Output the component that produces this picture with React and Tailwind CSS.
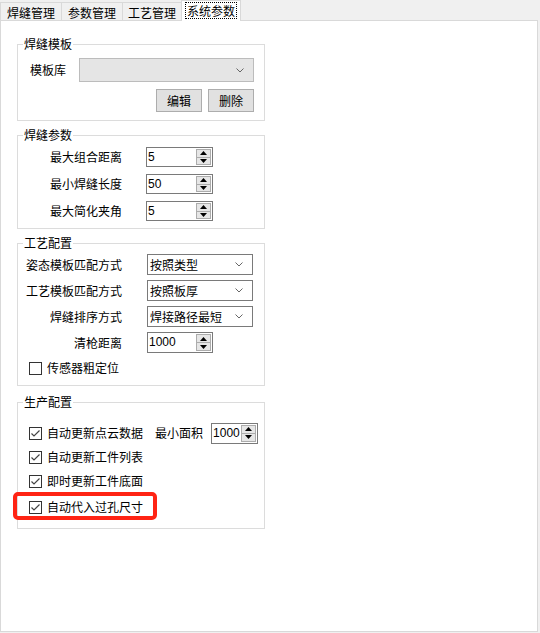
import React from 'react';

const ui = "font-['Noto_Sans_CJK_SC','Liberation_Sans',sans-serif] text-[12px] leading-[14px] text-black";

function Tab({ label, w, active }) {
  if (active) {
    return (
      <div className={`relative z-10 -mb-px flex h-[21px] items-start justify-center border border-b-0 border-[#d9d9d9] bg-white pt-[2px] ${w}`}>
        <span className="px-[1px] leading-[15px] outline-1 outline-dotted outline-[#000]">{label}</span>
      </div>
    );
  }
  return (
    <div className={`flex h-[18px] items-center justify-center border border-b-0 border-r-0 border-[#d9d9d9] bg-[#f0f0f0] pt-[2px] ${w}`}>
      {label}
    </div>
  );
}

function Group({ title, h, mt, children }) {
  return (
    <div className={`relative ml-[16px] w-[248px] border border-[#dcdcdc] ${h} ${mt}`}>
      <span className="absolute -top-[8px] left-[5px] bg-white px-[1px]">{title}</span>
      {children}
    </div>
  );
}

function Arrow({ up }) {
  return (
    <svg width="7" height="4" viewBox="0 0 7 4">
      <path d={up ? 'M0 4 L3.5 0 L7 4 Z' : 'M0 0 L3.5 4 L7 0 Z'} fill="#000" />
    </svg>
  );
}

function Spin({ value, w, h = 'h-[21px]' }) {
  return (
    <div className={`flex border border-[#7a7a7a] bg-white ${w} ${h}`}>
      <span className="flex-1 pl-[1px] pt-[2px] font-['Liberation_Sans',sans-serif] text-[12px] leading-[14px]">{value}</span>
      <div className="flex w-[16px] flex-col py-[1px] pr-[1px]">
        <div className="flex flex-1 items-center justify-center border border-[#acacac] bg-[#e6e6e6]">
          <Arrow up />
        </div>
        <div className="flex flex-1 items-center justify-center border border-t-0 border-[#acacac] bg-[#e6e6e6]">
          <Arrow />
        </div>
      </div>
    </div>
  );
}

function Chevron() {
  return (
    <svg width="8" height="5" viewBox="0 0 8 5" className="ml-auto mr-[9px]">
      <path d="M0.5 0.5 L4 4 L7.5 0.5" fill="none" stroke="#666" strokeWidth="1" />
    </svg>
  );
}

function Combo({ value }) {
  return (
    <div className="flex h-[21px] w-[106px] items-center border border-[#7a7a7a] bg-white pl-[2px]">
      <span>{value}</span>
      <Chevron />
    </div>
  );
}

function Check({ checked }) {
  return (
    <div className="flex h-[13px] w-[13px] items-center justify-center border border-[#333] bg-white">
      {checked && (
        <svg width="11" height="11" viewBox="0 0 11 11">
          <path d="M1.5 5.5 L4 8 L9.5 2.5" fill="none" stroke="#444" strokeWidth="1.2" />
        </svg>
      )}
    </div>
  );
}

function CheckRow({ label, checked, className = '', children }) {
  return (
    <div className={`flex h-[24px] items-center pl-[11px] ${className}`}>
      <Check checked={checked} />
      <span className="ml-[5px]">{label}</span>
      {children}
    </div>
  );
}

function Label({ text }) {
  return <span className="w-[104px] text-right">{text}</span>;
}

export default function App() {
  return (
    <div className={`h-[633px] w-[540px] overflow-hidden bg-[#f0f0f0] ${ui}`}>
      <div className="flex h-[20px] items-end">
        <Tab label="焊缝管理" w="w-[61px]" />
        <Tab label="参数管理" w="w-[61px]" />
        <Tab label="工艺管理" w="w-[59px]" />
        <Tab label="系统参数" w="w-[60px]" active />
      </div>

      <div className="h-[612px] w-[538px] border border-[#d9d9d9] bg-white">
        <Group title="焊缝模板" h="h-[77px]" mt="mt-[23px]">
          <div className="flex items-center pt-[13px]">
            <span className="ml-[12px] w-[49px]">模板库</span>
            <div className="flex h-[24px] w-[175px] items-center border border-[#bcbcbc] bg-[#e5e5e5]">
              <Chevron />
            </div>
          </div>
          <div className="mt-[7px] flex justify-end gap-[6px] pr-[10px]">
            <button className="h-[23px] w-[46px] border border-[#adadad] bg-[#e1e1e1]">编辑</button>
            <button className="h-[23px] w-[46px] border border-[#adadad] bg-[#e1e1e1]">删除</button>
          </div>
        </Group>

        <Group title="焊缝参数" h="h-[94px]" mt="mt-[14px]">
          <div className="flex flex-col gap-[7px] pt-[11px]">
            {[['最大组合距离', '5'], ['最小焊缝长度', '50'], ['最大简化夹角', '5']].map(([l, v]) => (
              <div key={l} className="flex items-center">
                <Label text={l} />
                <div className="ml-[24px]">
                  <Spin value={v} w="w-[67px]" h="h-[20px]" />
                </div>
              </div>
            ))}
          </div>
        </Group>

        <Group title="工艺配置" h="h-[143px]" mt="mt-[14px]">
          <div className="flex flex-col gap-[5px] pt-[10px]">
            <div className="flex items-center">
              <Label text="姿态模板匹配方式" />
              <div className="ml-[25px]"><Combo value="按照类型" /></div>
            </div>
            <div className="flex items-center">
              <Label text="工艺模板匹配方式" />
              <div className="ml-[25px]"><Combo value="按照板厚" /></div>
            </div>
            <div className="flex items-center">
              <Label text="焊缝排序方式" />
              <div className="ml-[25px]"><Combo value="焊接路径最短" /></div>
            </div>
            <div className="flex items-center">
              <Label text="清枪距离" />
              <div className="ml-[25px]"><Spin value="1000" w="w-[66px]" /></div>
            </div>
          </div>
          <CheckRow label="传感器粗定位" className="mt-[3px]" />
        </Group>

        <Group title="生产配置" h="h-[127px]" mt="mt-[16px]">
          <div className="pt-[18px]">
            <CheckRow label="自动更新点云数据" checked>
              <span className="ml-[12px]">最小面积</span>
              <div className="ml-[8px]"><Spin value="1000" w="w-[47px]" /></div>
            </CheckRow>
            <CheckRow label="自动更新工件列表" checked />
            <CheckRow label="即时更新工件底面" checked />
            <div className="relative mt-[2px]">
              <CheckRow label="自动代入过孔尺寸" checked />
              <div className="pointer-events-none absolute -left-[5px] -top-[3px] h-[28px] w-[144px] rounded-[5px] border-[4px] border-[#ff2414]" />
            </div>
          </div>
        </Group>
      </div>
    </div>
  );
}
